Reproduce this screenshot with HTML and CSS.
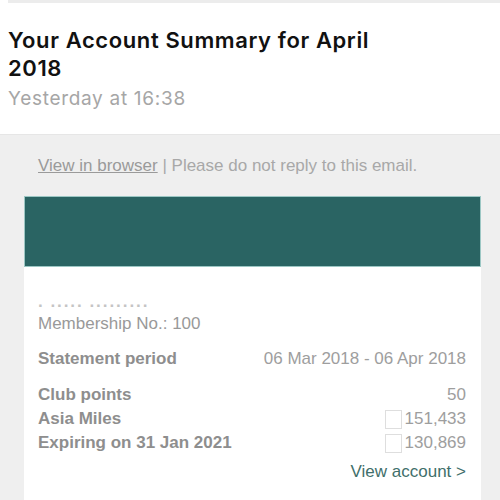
FILE: index.html
```html
<!DOCTYPE html>
<html lang="en">
<head>
    <meta charset="UTF-8">
    <meta name="viewport" content="width=device-width, initial-scale=1.0">
    <title>Your Account Summary for April 2018</title>
    <link rel="stylesheet" href="styles.css">
</head>
<body>
    <div class="topline"></div>
    <div class="header">
        <h1 class="subject">Your Account Summary for April<br>2018</h1>
        <p class="date">Yesterday at 16:38</p>
    </div>
    <div class="mail">
        <p class="notice"><a href="#">View in browser</a> | Please do not reply to this email.</p>
        <div class="banner"></div>
        <div class="card">
            <p class="name">&middot; &middot;&middot;&middot;&middot;&middot; &middot;&middot;&middot;&middot;&middot;&middot;&middot;&middot;&middot;</p>
            <p class="member">Membership No.: 100</p>
            <ul class="row period">
                <li class="label">Statement period</li>
                <li class="value">06 Mar 2018 - 06 Apr 2018</li>
            </ul>
            <ul class="row">
                <li class="label">Club points</li>
                <li class="value">50</li>
            </ul>
            <ul class="row">
                <li class="label">Asia Miles</li>
                <li class="value"><span class="box"></span>151,433</li>
            </ul>
            <ul class="row">
                <li class="label">Expiring on 31 Jan 2021</li>
                <li class="value"><span class="box"></span>130,869</li>
            </ul>
            <p class="more"><a href="#">View account &gt;</a></p>
        </div>
    </div>
</body>
</html>
```

FILE: styles.css
```css
* {
    margin: 0;
    padding: 0;
    box-sizing: border-box;
}

body {
    font-family: "Liberation Sans", Arial, sans-serif;
    background-color: #fff;
}

.topline {
    height: 3px;
    margin-left: 8px;
    background-color: #ececec;
}

.header {
    padding: 23px 8px 23px 8px;
    font-family: Inter, "Liberation Sans", sans-serif;
}

.header .subject {
    font-size: 22px;
    font-weight: 600;
    line-height: 28px;
    letter-spacing: 0.6px;
    color: #111;
}

.header .date {
    margin-top: 5px;
    font-size: 19px;
    line-height: 24px;
    letter-spacing: 0.7px;
    color: #a6a6a6;
}

.mail {
    background-color: #efefef;
    border-top: 1px solid #e6e6e6;
    padding: 0 19px 0 24px;
}

.notice {
    padding: 21px 14px 20px 14px;
    font-size: 17px;
    line-height: 20px;
    color: #a8a8a8;
}

.notice a {
    color: #9a9a9a;
}

.banner {
    height: 71px;
    background-color: #2a6463;
    border: 1px solid #9cc7c4;
}

.card {
    background-color: #fff;
    padding: 32px 15px 40px 14px;
    color: #8e8e8e;
    font-size: 17px;
}

.card .name {
    height: 14px;
    line-height: 14px;
    color: #c4c4c4;
    font-weight: bold;
    letter-spacing: 1px;
}

.card .member {
    line-height: 22px;
    color: #999;
}

.row {
    list-style: none;
    display: flex;
    justify-content: space-between;
    line-height: 24px;
}

.row.period {
    margin: 12px 0;
}

.row .label {
    font-weight: bold;
}

.row .value {
    display: flex;
    align-items: center;
    color: #9e9e9e;
}

.box {
    width: 17px;
    height: 19px;
    margin-right: 3px;
    border: 1px solid #dedede;
}

.more {
    margin-top: 5px;
    text-align: right;
    line-height: 24px;
}

.more a {
    color: #3f6f6b;
    text-decoration: none;
}
```
